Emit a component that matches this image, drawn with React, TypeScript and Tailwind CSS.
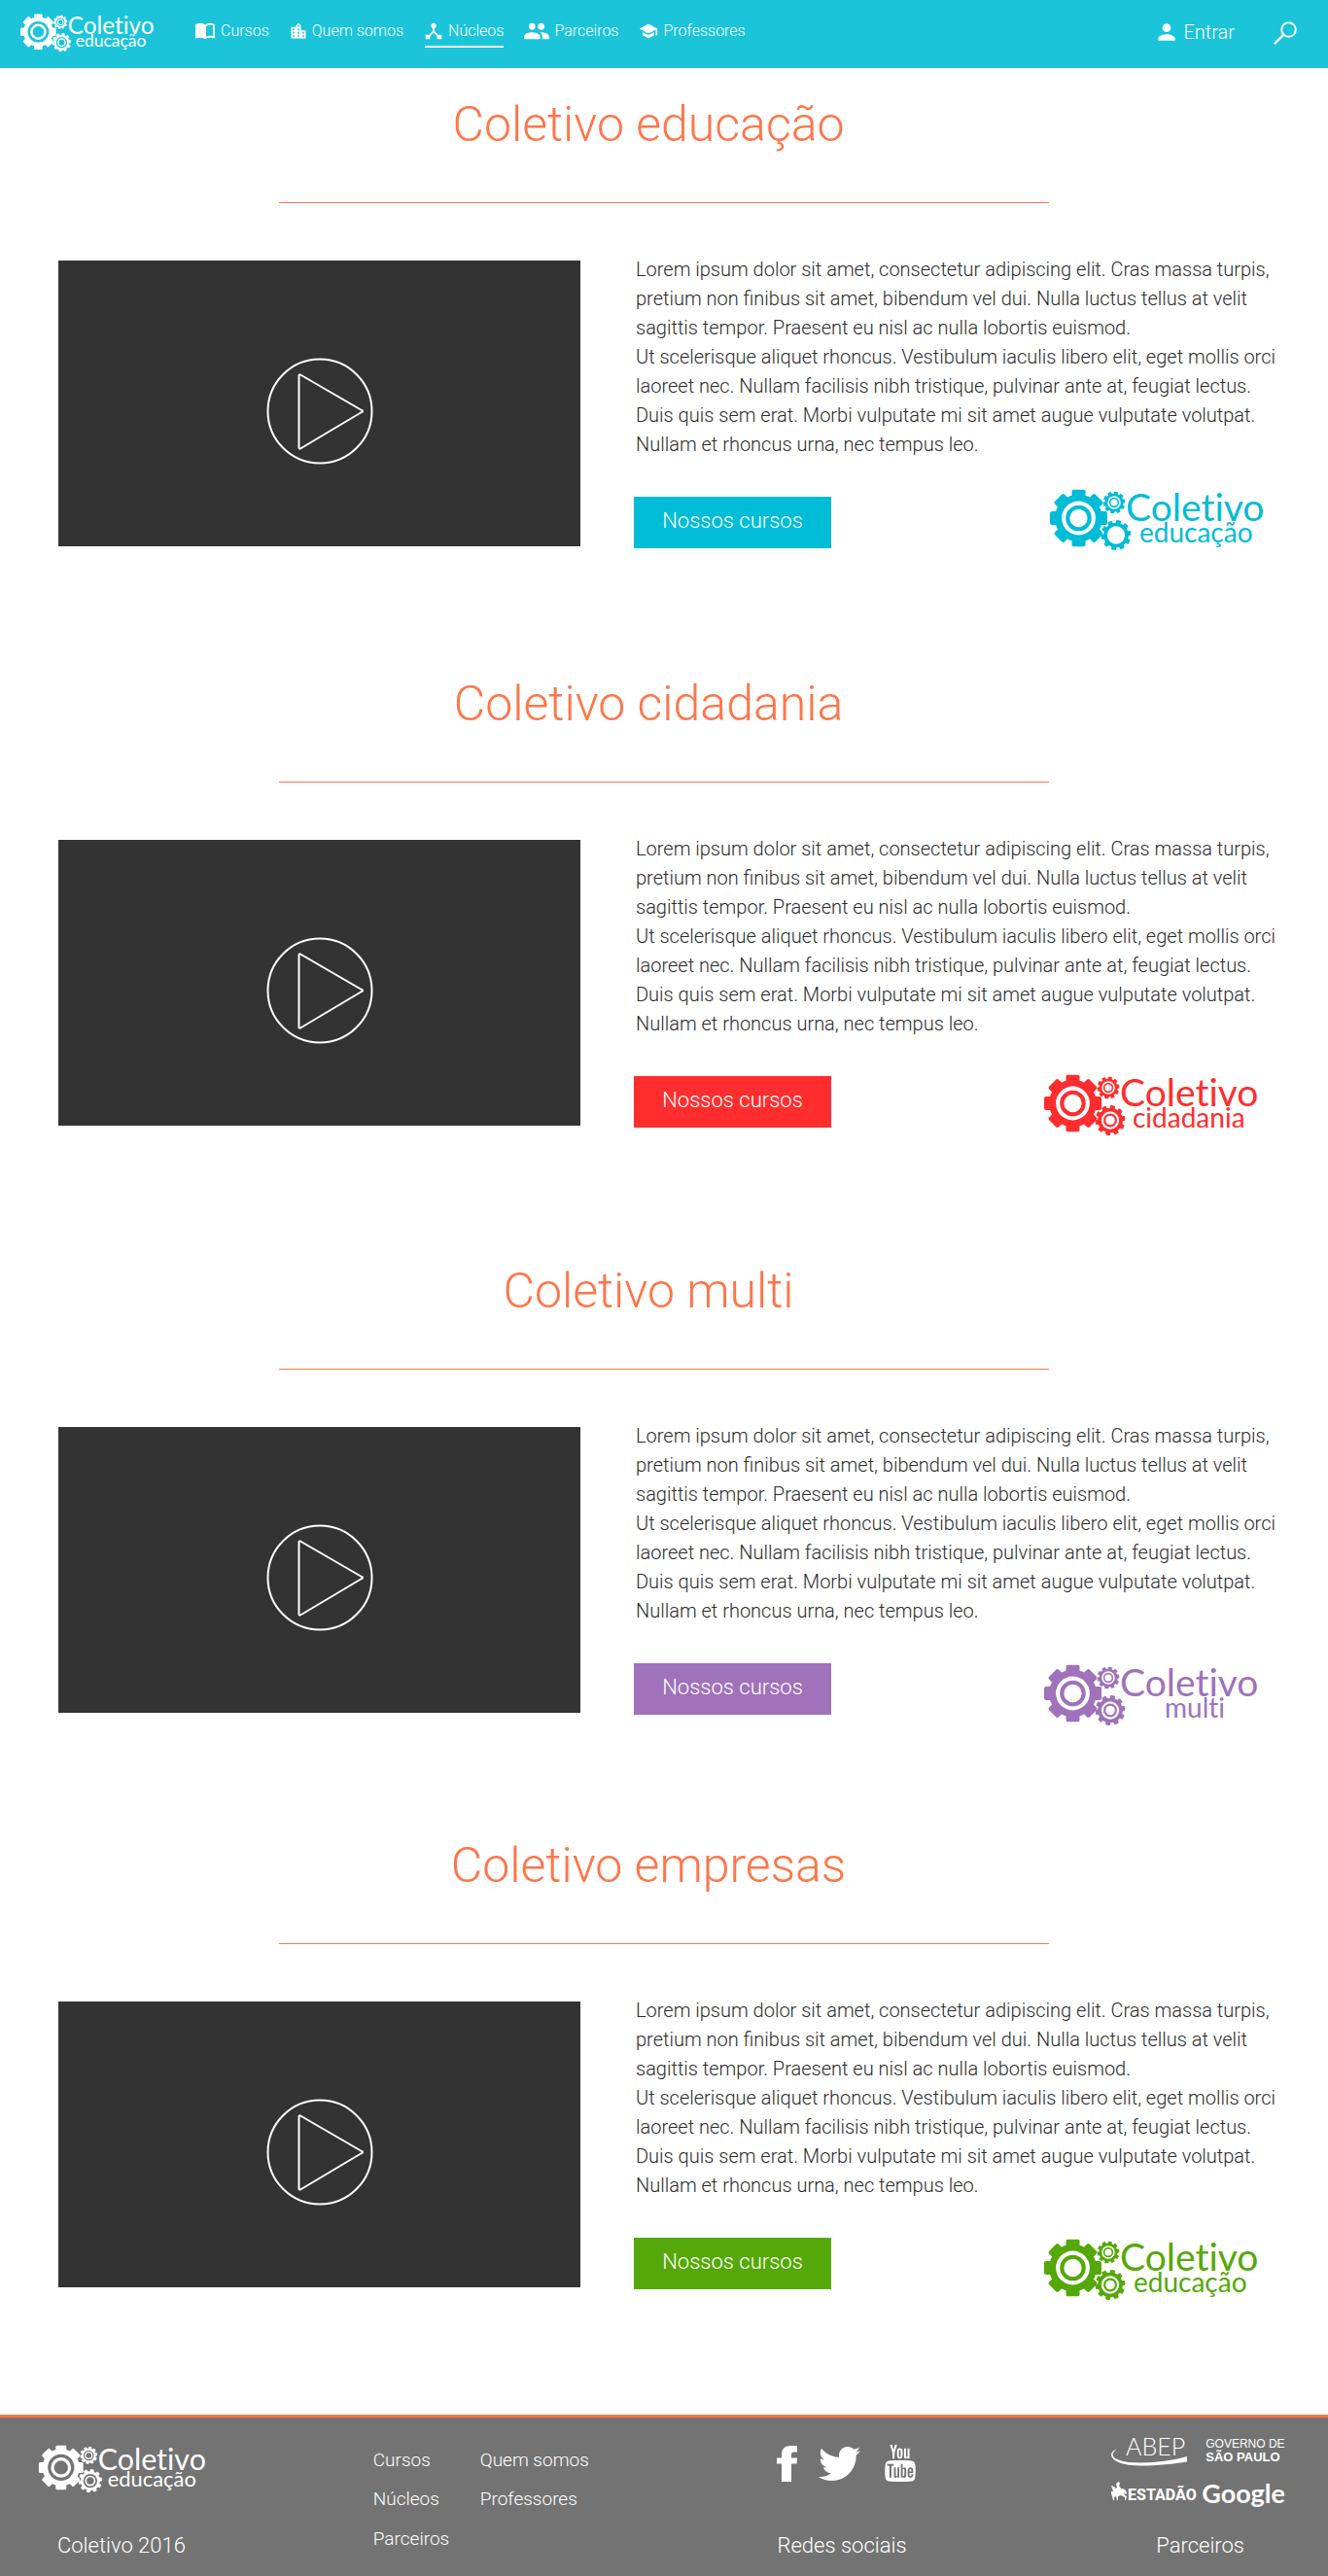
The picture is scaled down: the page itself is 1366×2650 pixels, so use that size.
import React from "react";
import {
  MdDeviceHub,
  MdGroup,
  MdLocationCity,
  MdPerson,
  MdSchool,
} from "react-icons/md";
import { FaTwitter } from "react-icons/fa";
import { TfiYoutube } from "react-icons/tfi";

type GearProps = {
  cx: number;
  cy: number;
  r: number;
  teeth: number;
  toothWidth: number;
  id: string;
  ring?: boolean;
  turn?: number;
};

function Gear({ cx, cy, r, teeth, toothWidth, id, ring = true, turn = 0 }: GearProps) {
  const angles = Array.from({ length: teeth }, (_, i) => turn + (360 / teeth) * i);
  return (
    <g transform={`translate(${cx} ${cy})`}>
      <mask id={id}>
        <rect x={-r} y={-r} width={2 * r} height={2 * r} fill="white" />
        <circle r={r * 0.59} fill="black" />
      </mask>
      <g mask={`url(#${id})`} fill="currentColor">
        <circle r={r * 0.83} />
        {angles.map((a) => (
          <rect
            key={a}
            x={-toothWidth / 2}
            y={-r}
            width={toothWidth}
            height={r * 0.5}
            rx={r * 0.07}
            transform={`rotate(${a})`}
          />
        ))}
      </g>
      {ring && (
        <circle r={r * 0.38} fill="none" stroke="currentColor" strokeWidth={r * 0.14} />
      )}
    </g>
  );
}

type LogoProps = {
  id: string;
  word: string;
  wordX: number;
  className: string;
  openGear?: boolean;
};

function Logo({ id, word, wordX, className, openGear = false }: LogoProps) {
  return (
    <svg
      viewBox="0 0 226 64"
      role="img"
      aria-label={`Coletivo ${word}`}
      className={`overflow-visible font-normal [font-variant-ligatures:none] ${className}`}
    >
      <Gear id={`${id}-a`} cx={29.5} cy={30} r={29.5} teeth={8} toothWidth={14} />
      <Gear id={`${id}-b`} cx={66} cy={14} r={11.5} teeth={10} toothWidth={4} turn={10} />
      <Gear
        id={`${id}-c`}
        cx={68}
        cy={47.5}
        r={15.5}
        teeth={10}
        toothWidth={5}
        turn={10}
        ring={!openGear}
      />
      <text x="78" y="33" fontFamily="Lato, sans-serif" fontSize="39" fill="currentColor">
        Coletivo
      </text>
      <text x={wordX} y="55" fontFamily="Lato, sans-serif" fontSize="28" fill="currentColor">
        {word}
      </text>
    </svg>
  );
}

function BookIcon() {
  return (
    <svg viewBox="0 0 20 16" className="h-4 w-5" aria-hidden="true">
      <path
        fill="currentColor"
        fillRule="evenodd"
        d="M10 1.4C8.400 .400 6.600 0 4.800 0 3 0 1.400 .300 0 1.200V15.600C1.500 15 3.200 14.700 4.800 14.700 6.700 14.700 8.400 15.100 10 16 11.600 15.100 13.300 14.700 15.200 14.700 16.800 14.700 18.500 15 20 15.600V1.200C18.600 .300 17 0 15.200 0 13.400 0 11.600 .400 10 1.400ZM11 3C12.300 2.100 13.700 1.800 15.200 1.800 16.300 1.800 17.200 1.900 18.200 2.300V13.200C17.200 12.900 16.200 12.800 15.200 12.800 13.700 12.800 12.300 13.100 11 13.700Z"
      />
    </svg>
  );
}

function SearchIcon() {
  return (
    <svg viewBox="0 0 24 24" className="size-6" fill="none" stroke="currentColor" aria-hidden="true">
      <circle cx="15.500" cy="8.500" r="7.300" strokeWidth="2" />
      <path d="M10.200 13.800 1.500 22.500" strokeWidth="2.400" strokeLinecap="round" />
    </svg>
  );
}

function FacebookIcon() {
  return (
    <svg viewBox="0 0 21 37" className="h-[37px] w-[21px]" aria-hidden="true">
      <path
        fill="currentColor"
        d="M5 37V18.500H0V12.500H5V9C5 3 8.500 0 14.500 0H21V6.500H17.500C15.500 6.500 15 7.500 15 9V12.500H21L20.500 18.500H15V37Z"
      />
    </svg>
  );
}

const nav = [
  { label: "Cursos", icon: <BookIcon /> },
  { label: "Quem somos", icon: <MdLocationCity className="size-5 -mx-0.5" /> },
  { label: "Núcleos", icon: <MdDeviceHub className="size-[22px] -mx-0.5" />, active: true },
  { label: "Parceiros", icon: <MdGroup className="size-7 -mx-0.5" /> },
  { label: "Professores", icon: <MdSchool className="size-5 -mx-px" /> },
];

function Header() {
  return (
    <header className="flex h-[70px] items-center bg-[#1bc4d9] pb-0.5 pl-[21px] pr-8 text-white">
      <a href="#inicio">
        <Logo id="top" word="educação" wordX={91} className="h-10 w-[141px]" />
      </a>
      <nav className="mb-0.5 ml-[39px] flex items-center gap-[22px]">
        {nav.map((item) => (
          <a
            key={item.label}
            href={`#${item.label}`}
            className={`flex h-8 items-center gap-1.5 border-b-2 text-base ${
              item.active ? "border-white" : "border-transparent"
            }`}
          >
            {item.icon}
            {item.label}
          </a>
        ))}
      </nav>
      <a href="#entrar" className="mb-0.5 ml-auto flex items-center gap-1 text-xl">
        <MdPerson className="size-[26px]" />
        Entrar
      </a>
      <button type="button" aria-label="Buscar" className="ml-10">
        <SearchIcon />
      </button>
    </header>
  );
}

type Nucleo = {
  name: string;
  word: string;
  wordX: number;
  logoStyle: string;
  buttonColor: string;
  spacing: string;
  openGear?: boolean;
};

const nucleos: Nucleo[] = [
  {
    name: "educacao",
    word: "educação",
    wordX: 92,
    logoStyle: "mb-1.5 text-[#00bcd6]",
    buttonColor: "bg-[#00bcd6]",
    spacing: "pb-[130px]",
    openGear: true,
  },
  {
    name: "cidadania",
    word: "cidadania",
    wordX: 91,
    logoStyle: "mt-1.5 mr-1.5 text-[#ff2d2e]",
    buttonColor: "bg-[#ff2d2e]",
    spacing: "pb-[138px]",
  },
  {
    name: "multi",
    word: "multi",
    wordX: 124,
    logoStyle: "mt-3 mr-1.5 text-[#9f72ba]",
    buttonColor: "bg-[#9f72ba]",
    spacing: "pb-[125px]",
  },
  {
    name: "empresas",
    word: "educação",
    wordX: 92,
    logoStyle: "mt-3 mr-1.5 text-[#55a809]",
    buttonColor: "bg-[#55a809]",
    spacing: "pb-[129px]",
  },
];

function Section({ nucleo }: { nucleo: Nucleo }) {
  const title = nucleo.name === "educacao" ? "educação" : nucleo.name;
  return (
    <section className={nucleo.spacing}>
      <h2 className="pr-8 text-center text-[50px] leading-[60px] text-[#ff7549]">
        Coletivo {title}
      </h2>
      <hr className="mx-auto mt-[50px] w-[58%] border-[#ff7549]" />
      <div className="mt-[53px] grid grid-cols-[537fr_666fr] gap-x-[55px] pl-[60px] pr-12">
        <button
          type="button"
          aria-label={`Assistir Coletivo ${title}`}
          className="mt-1.5 flex aspect-[537/294] w-full items-center justify-center self-start bg-[#333] text-white"
        >
          <svg
            viewBox="0 0 110 110"
            className="mt-4 size-[110px]"
            fill="none"
            stroke="currentColor"
            strokeWidth="2"
            strokeLinejoin="round"
          >
            <circle cx="55" cy="55" r="53.500" />
            <path d="M33.500 18.500a1 1 0 0 1 1.500-1L98 54a1 1 0 0 1 0 2L35 93.500a1 1 0 0 1-1.500-1Z" />
          </svg>
        </button>
        <div>
          <div className="pl-0.5 text-xl leading-[30px] text-[#2b2b2b]">
            <p>
              Lorem ipsum dolor sit amet, consectetur adipiscing elit. Cras massa turpis, pretium non
              finibus sit amet, bibendum vel dui. Nulla luctus tellus at velit sagittis tempor.
              Praesent eu nisl ac nulla lobortis euismod.
            </p>
            <p>
              Ut scelerisque aliquet rhoncus. Vestibulum iaculis libero elit, eget mollis orci laoreet
              nec. Nullam facilisis nibh tristique, pulvinar ante at, feugiat lectus. Duis quis sem
              erat. Morbi vulputate mi sit amet augue vulputate volutpat. Nullam et rhoncus urna, nec
              tempus leo.
            </p>
          </div>
          <div className="mt-[39px] flex h-[53px] items-center justify-between pr-3">
            <button
              type="button"
              className={`h-[53px] w-[203px] pb-1 text-[22px] text-white ${nucleo.buttonColor}`}
            >
              Nossos cursos
            </button>
            <div className={nucleo.logoStyle}>
              <Logo
                id={nucleo.name}
                word={nucleo.word}
                wordX={nucleo.wordX}
                openGear={nucleo.openGear}
                className="h-16 w-[226px]"
              />
            </div>
          </div>
        </div>
      </div>
    </section>
  );
}

function AbepLogo() {
  return (
    <svg viewBox="0 0 80 30" className="h-[30px] w-20 overflow-visible" role="img" aria-label="ABEP">
      <text x="15" y="19" fontFamily="Lato, sans-serif" fontWeight="300" fontSize="25" fill="currentColor">
        ABEP
      </text>
      <path
        fill="currentColor"
        d="M6 12C2 14 0 16 0 18.500 1 25 12 29.500 30 29.500 48 29.500 65 27.500 78 25.500V20C66 23.500 48 26.500 30 26.500 13 26.500 2 23 1.500 18.500 1.500 16.500 3 14.500 6 12Z"
      />
    </svg>
  );
}

function EstadaoLogo() {
  return (
    <svg viewBox="0 0 84 22" className="h-[22px] w-[84px] overflow-visible" role="img" aria-label="Estadão">
      <path
        fill="currentColor"
        d="M0 4 3 5 5 7 6 6 5 3 6 1 8 0 9 2 8 4 10 7 12 7 15 9 16 12 15 13 13 11 14 14 16 15 15 19 14 19 14 16 10 14 7 15 7 19 6 19 5 15 3 16 3 19 2 19 1 15 0 12 0 10 2 10 1 7Z"
      />
      <text x="17" y="19" fontFamily="Roboto, sans-serif" fontWeight="800" fontSize="16" fill="currentColor">
        ESTADÃO
      </text>
    </svg>
  );
}

function Footer() {
  return (
    <footer className="grid h-[166px] grid-cols-[345fr_416fr_344fr_178fr] border-t-[3px] border-[#ff7549] bg-[#737373] pb-[18px] pl-[39px] pr-11 text-white">
      <div className="flex flex-col justify-between pt-7">
        <Logo id="foot" word="educação" wordX={91} className="h-[50px] w-[178px]" />
        <p className="pl-5 text-[22px] leading-[26px]">Coletivo 2016</p>
      </div>
      <nav className="grid grid-cols-[110px_auto] grid-rows-3 pt-6 text-[19px] leading-10">
        <a href="#cursos">Cursos</a>
        <a href="#quem">Quem somos</a>
        <a href="#nucleos">Núcleos</a>
        <a href="#professores">Professores</a>
        <a href="#parceiros">Parceiros</a>
      </nav>
      <div className="flex flex-col justify-between pt-7">
        <div className="flex h-[38px] items-center gap-[22px]">
          <a href="#facebook" aria-label="Facebook">
            <FacebookIcon />
          </a>
          <a href="#twitter" aria-label="Twitter">
            <FaTwitter className="size-[43px]" />
          </a>
          <a href="#youtube" aria-label="YouTube">
            <TfiYoutube className="size-[38px]" />
          </a>
        </div>
        <p className="text-[22px] leading-[26px]">Redes sociais</p>
      </div>
      <div className="flex flex-col justify-between pt-5">
        <div className="grid grid-cols-[93px_auto] items-start gap-y-4">
          <AbepLogo />
          <p className="whitespace-nowrap pl-1 font-['Liberation_Sans'] text-xs font-normal leading-[14px]">
            GOVERNO DE
            <br />
            <b className="text-[13px] font-bold">SÃO PAULO</b>
          </p>
          <EstadaoLogo />
          <p className="font-[Lato] text-[27px] font-bold leading-6">Google</p>
        </div>
        <p className="pl-1 text-center text-[22px] leading-[26px]">Parceiros</p>
      </div>
    </footer>
  );
}

export default function App() {
  return (
    <div className="bg-white font-[Roboto,sans-serif] font-light">
      <Header />
      <main className="pt-7">
        {nucleos.map((n) => (
          <Section key={n.name} nucleo={n} />
        ))}
      </main>
      <Footer />
    </div>
  );
}
